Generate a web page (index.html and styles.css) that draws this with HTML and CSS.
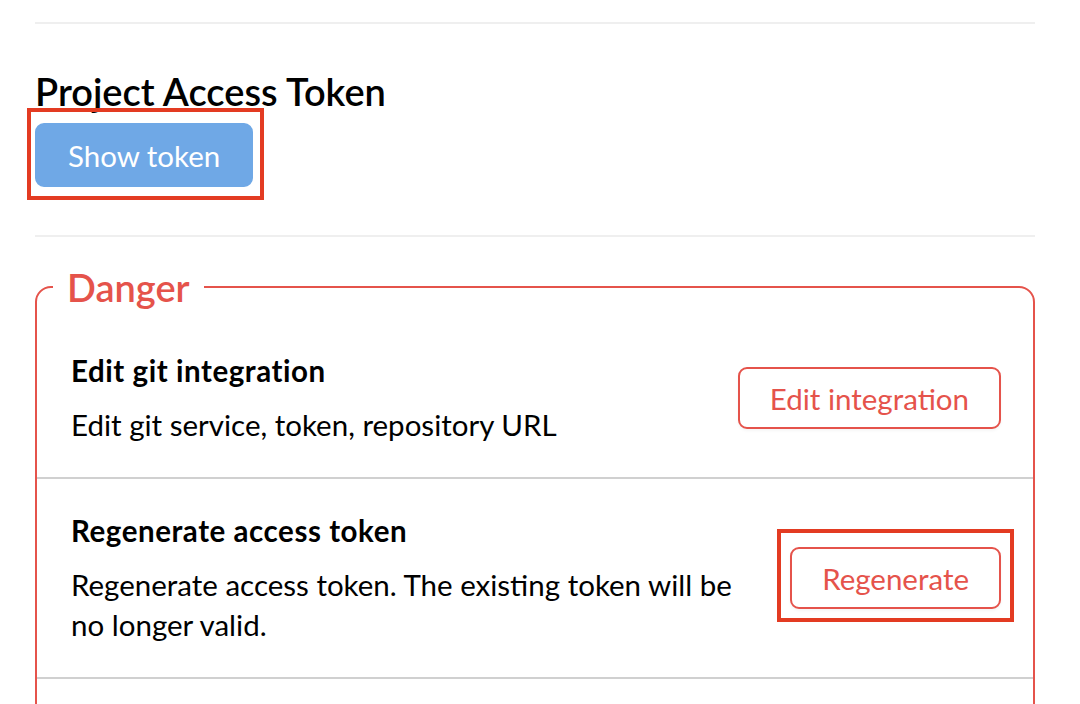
FILE: index.html
```html
<!DOCTYPE html>
<html lang="en">
<head>
<meta charset="utf-8">
<title>Project settings</title>
<link rel="stylesheet" href="styles.css">
</head>
<body>
<main class="page">
  <div class="divider"></div>
  <section class="token-section">
    <h2 class="section-title">Project Access Token</h2>
    <div class="annotated annotated--show">
      <button class="btn btn-primary" type="button">Show token</button>
    </div>
  </section>
  <div class="divider"></div>
  <fieldset class="danger">
    <legend class="danger-legend">Danger</legend>
    <div class="danger-row">
      <div class="danger-text">
        <div class="danger-title">Edit git integration</div>
        <div class="danger-desc">Edit git service, token, repository URL</div>
      </div>
      <button class="btn btn-danger" type="button">Edit integration</button>
    </div>
    <div class="danger-row">
      <div class="danger-text">
        <div class="danger-title">Regenerate access token</div>
        <div class="danger-desc">Regenerate access token. The existing token will be no longer valid.</div>
      </div>
      <div class="annotated annotated--regen">
        <button class="btn btn-danger" type="button">Regenerate</button>
      </div>
    </div>
    <div class="danger-tail"></div>
  </fieldset>
</main>
</body>
</html>
```
FILE: styles.css
```css
html, body {
  margin: 0;
  padding: 0;
  background: #ffffff;
}
body {
  font-family: "Lato", "Open Sans", sans-serif;
  color: #000000;
  overflow: hidden;
}
.page {
  width: 1000px;
  margin-left: 35px;
  padding-top: 22px;
}
.divider {
  height: 2px;
  background: #efefef;
}
.token-section {
  padding: 45px 0 48px 0;
}
.section-title {
  margin: 0 0 10px 0;
  font-size: 38px;
  line-height: 44px;
  font-weight: 600;
}
.annotated {
  position: relative;
  display: inline-block;
}
.annotated::after {
  content: "";
  position: absolute;
  border: 4px solid #e33b22;
  pointer-events: none;
}
.annotated--show::after {
  top: -15px;
  left: -8px;
  right: -11px;
  bottom: -13px;
}
.annotated--regen::after {
  top: -18px;
  left: -13px;
  right: -13px;
  bottom: -13px;
}
.btn {
  font-family: inherit;
  font-size: 29.5px;
  border-radius: 9px;
  cursor: pointer;
  display: block;
}
.btn-primary {
  height: 64px;
  padding: 0 31px;
  background: #6fa8e6;
  border: 2px solid #6fa8e6;
  color: #ffffff;
}
.btn-danger {
  height: 62px;
  padding: 0 30px;
  background: #ffffff;
  border: 2px solid #e5534b;
  color: #e5534b;
  box-shadow: 0 2px 3px rgba(0, 0, 0, 0.04);
}
.danger {
  margin: 28px 0 0 0;
  padding: 10px 0 60px 0;
  border: 2px solid #e5534b;
  border-radius: 16px;
  min-width: 0;
}
.danger-legend {
  margin-left: 16px;
  padding: 0 14px;
  font-size: 38px;
  line-height: 44px;
  font-weight: 600;
  color: #e5534b;
}
.danger-row {
  display: flex;
  align-items: center;
  justify-content: space-between;
  gap: 40px;
  padding: 32px 32px 32px 34px;
  border-bottom: 2px solid #d0d0d0;
}
.danger-text {
  flex: 1;
  max-width: 680px;
}
.danger-title {
  font-size: 29.5px;
  line-height: 40px;
  font-weight: 700;
  letter-spacing: 0.55px;
  margin-bottom: 14px;
}
.danger-desc {
  font-size: 29.5px;
  line-height: 40px;
}
```
